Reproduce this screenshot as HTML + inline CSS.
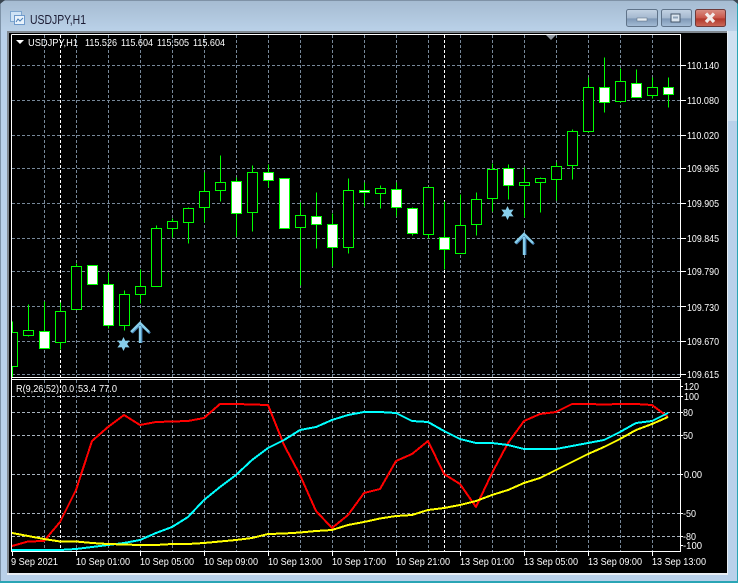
<!DOCTYPE html>
<html><head><meta charset="utf-8"><style>
html,body{margin:0;padding:0;width:738px;height:583px;overflow:hidden;background:#b9d1ea}
svg{display:block;position:absolute;left:0;top:0}
text{font-family:"Liberation Sans",sans-serif;font-size:10.400px;fill:#fff}
</style></head><body>
<svg width="738" height="583" viewBox="0 0 738 583" xmlns="http://www.w3.org/2000/svg">
<defs>
<linearGradient id="tb" x1="0" y1="0" x2="0" y2="1"><stop offset="0" stop-color="#a5bbd1"/><stop offset="1" stop-color="#bad1e8"/></linearGradient>
<linearGradient id="bt" x1="0" y1="0" x2="0" y2="1"><stop offset="0" stop-color="#c4d3e4"/><stop offset=".5" stop-color="#a4b8cf"/><stop offset=".55" stop-color="#7f98b6"/><stop offset="1" stop-color="#a5bdd6"/></linearGradient>
<linearGradient id="rd" x1="0" y1="0" x2="0" y2="1"><stop offset="0" stop-color="#d98f85"/><stop offset=".5" stop-color="#c9574a"/><stop offset=".55" stop-color="#b1382b"/><stop offset="1" stop-color="#cc6a5a"/></linearGradient>
<clipPath id="cm"><rect x="12" y="35" width="668" height="342"/></clipPath>
</defs>
<rect width="738" height="583" fill="#b9d1ea"/>
<rect width="738" height="31" fill="url(#tb)"/>
<rect x="0" y="0" width="738" height="1" fill="#7f92a6"/>
<rect x="728" y="31" width="9" height="90" fill="#cfe0f0"/>
<rect x="0" y="0" width="1" height="583" fill="#7e93a8"/>
<rect x="737" y="0" width="1" height="583" fill="#2aa5b5"/>
<rect x="0" y="581" width="738" height="2" fill="#2aa5b5"/>
<polygon points="0,0 5,0 0,4" fill="#3a4550"/>
<polygon points="738,0 733,0 738,4" fill="#3a4550"/>
<rect x="7" y="31" width="721" height="544" fill="#e8eef4"/>
<rect x="7" y="31" width="720" height="542" fill="#808890"/>
<rect x="9" y="33" width="718" height="540" fill="#000"/>

<!-- title icon -->
<rect x="10.500" y="11.500" width="11" height="10" fill="#cfe3f5" stroke="#7ea6cf"/>
<rect x="14.500" y="15.500" width="10" height="9" fill="#e8f2fb" stroke="#6f9acb"/>
<path d="M16 22l2-3 2 2 3-3" fill="none" stroke="#4a7fb8"/>
<text x="30" y="24" textLength="56" lengthAdjust="spacingAndGlyphs" style="font-size:13px;fill:#1b1b33">USDJPY,H1</text>

<!-- buttons -->
<rect x="626.500" y="9.500" width="31" height="17" rx="2" fill="url(#bt)" stroke="#5f7389"/>
<rect x="637" y="18" width="10" height="3" fill="#e6edf3" stroke="#56687c" stroke-width=".5"/>
<rect x="661.500" y="9.500" width="30" height="17" rx="2" fill="url(#bt)" stroke="#5f7389"/>
<rect x="671" y="14" width="9" height="8" fill="#dbe5ef" stroke="#44566a"/>
<rect x="673" y="16.500" width="5" height="2" fill="#8fa3b8"/>
<rect x="695.500" y="9.500" width="30" height="17" rx="2" fill="url(#rd)" stroke="#6e3a3a"/>
<path d="M706 13.500l8 8.500M714 13.500l-8 8.500" stroke="#f3ecea" stroke-width="3.200" fill="none"/>

<!-- grid -->
<g shape-rendering="crispEdges" stroke-width="1" fill="none">
<path stroke="#778899" stroke-dasharray="3 2" d="M12 65.500H680M12 100.500H680M12 135.500H680M12 168.500H680M12 203.500H680M12 238.500H680M12 271.500H680M12 306.500H680M12 341.500H680M12 374.500H680"/>
<path stroke="#778899" stroke-dasharray="3 2" d="M44.500 35V377M76.500 35V377M108.500 35V377M140.500 35V377M172.500 35V377M204.500 35V377M236.500 35V377M268.500 35V377M300.500 35V377M332.500 35V377M364.500 35V377M396.500 35V377M428.500 35V377M460.500 35V377M492.500 35V377M524.500 35V377M556.500 35V377M588.500 35V377M620.500 35V377M652.500 35V377M44.500 380V552M76.500 380V552M108.500 380V552M140.500 380V552M172.500 380V552M204.500 380V552M236.500 380V552M268.500 380V552M300.500 380V552M332.500 380V552M364.500 380V552M396.500 380V552M428.500 380V552M460.500 380V552M492.500 380V552M524.500 380V552M556.500 380V552M588.500 380V552M620.500 380V552M652.500 380V552"/>
<path stroke="#fff" stroke-dasharray="3 2" d="M60.500 35V377M444.500 35V377M60.500 380V552M444.500 380V552"/>
<path stroke="#a9b4bf" stroke-dasharray="3 2" d="M12 396.500H680M12 412.500H680M12 435.500H680M12 474.500H680M12 513.500H680M12 536.500H680"/>
</g>

<!-- candles -->
<g clip-path="url(#cm)">
<g transform="translate(.5 .5)" shape-rendering="crispEdges" stroke="#00ff00" stroke-width="1">
<path fill="none" d="M12 321V380M28 304V336M44 301V331M60 302V349M76 263V266M108 272V328M124 290V330M140 269V303M156 225V228M172 218V237M188 207V243M204 172V222M220 155V201M236 177V236M252 165V231M268 164V187M300 202V285M316 192V248M332 213V266M348 178V253M364 182V206M380 185V208M396 182V216M412 207V235M428 187V238M444 201V269M460 194V253M476 192V235M492 163V211M508 164V199M524 167V217M540 177V212M556 162V200M572 129V179M588 77V132M604 57V112M620 68V102M636 69V97M652 77V98M668 77V107"/>
<path fill="#000" d="M7 332h10v34h-10zM23 330h10v5h-10zM55 311h10v31h-10zM71 266h10v43h-10zM119 294h10v31h-10zM135 286h10v8h-10zM151 228h10v58h-10zM167 221h10v7h-10zM183 208h10v14h-10zM199 191h10v16h-10zM215 182h10v8h-10zM247 172h10v40h-10zM295 215h10v12h-10zM343 190h10v57h-10zM375 188h10v5h-10zM423 187h10v47h-10zM455 225h10v28h-10zM471 199h10v25h-10zM487 169h10v29h-10zM519 182h10v3h-10zM535 178h10v4h-10zM551 166h10v13h-10zM567 131h10v34h-10zM583 87h10v44h-10zM615 81h10v20h-10zM647 87h10v8h-10z"/>
<path fill="#fff" d="M39 331h10v17h-10zM87 265h10v19h-10zM103 284h10v41h-10zM231 181h10v32h-10zM263 172h10v8h-10zM279 178h10v50h-10zM311 216h10v8h-10zM327 224h10v23h-10zM359 190h10v2h-10zM391 189h10v18h-10zM407 208h10v25h-10zM439 237h10v12h-10zM503 168h10v17h-10zM599 87h10v15h-10zM631 83h10v14h-10zM663 87h10v7h-10z"/>
</g>
</g>

<!-- arrows and stars -->
<g fill="none" stroke-width="2.400">
<path stroke="#4682b4" d="M141.200 327V343M132 332.800L140.500 324.300L150 333.300"/>
<path stroke="#87ceeb" d="M140 326V343M131 332L140 323L149 332"/>
<path stroke="#4682b4" d="M525.200 238V255M516 243.800L524.500 235.300L534 244.300"/>
<path stroke="#87ceeb" d="M524 237V255M515 243L524 234L533 243"/>
</g>
<g fill="#87ceeb">
<polygon points="123.500,337 125.300,340.800 129.600,340.500 127.100,344 129.600,347.500 125.300,347.200 123.500,351 121.700,347.200 117.400,347.500 119.900,344 117.400,340.500 121.700,340.800"/>
<polygon points="507.500,206 509.300,209.800 513.600,209.500 511.100,213 513.600,216.500 509.300,216.200 507.500,220 505.700,216.200 501.400,216.500 503.900,213 501.400,209.500 505.700,209.800"/>
</g>
<polygon points="546,35 556,35 551,40" fill="#8f979f"/>

<!-- indicator lines -->
<g fill="none" stroke-width="2" shape-rendering="crispEdges" stroke-linejoin="round">
<polyline stroke="#ff0000" points="12,546 28,541.500 44,541 60,522 76,490 92,441 108,427 124,415 140,425 156,422 172,421.500 188,421 204,418 220,404 236,404 252,404.500 268,405 284,445 300,475 316,511 332,528 348,515 364,493 380,489 396,461 412,454 428,441 444,474 460,484 476,507 492,473 508,443 524,421 540,414 556,412 572,404 588,404 604,404.500 620,404 636,404 652,405 668,417"/>
<polyline stroke="#00ffff" points="12,550 60,550 76,549 92,547 108,545 124,543 140,540 156,533 172,527 188,517 204,500 220,487 236,475 252,460 268,448 284,440 300,430 316,427 332,420 348,415 364,412 380,412 396,413 412,421 428,422 444,431 460,439 476,443 492,443 508,445 524,449 540,449 556,449 572,446 588,443 604,440 620,432 636,423 652,421 668,413"/>
<polyline stroke="#ffff00" points="12,533 28,536 44,539 60,541.500 76,541.500 92,543 108,544 124,544.500 140,545 156,545 172,544 188,544 204,543 220,541.500 236,540 252,538 268,534 284,533.500 300,532.500 316,531 332,530 348,525 364,522 380,518.500 396,516 412,515 428,510 444,508 460,505 476,501 492,495 508,490 524,483 540,478 556,470 572,462 588,454 604,447 620,439 636,430 652,424 668,417"/>
</g>

<!-- frames -->
<g shape-rendering="crispEdges" fill="none" stroke="#fff" stroke-width="1">
<path d="M11.500 34.500H680.500V377M11.500 34.500V552M11 377.500H680.500M11 379.500H680.500V551.500H11"/>
<path d="M681 65.500h5M681 100.500h5M681 135.500h5M681 168.500h5M681 203.500h5M681 238.500h5M681 271.500h5M681 306.500h5M681 341.500h5M681 374.500h5"/>
<path d="M681 386.500h2M681 396.500h2M681 412.500h2M681 435.500h2M681 474.500h2M681 513.500h2M681 536.500h2M681 545.500h2"/>
<path d="M12.500 552v4M76.500 552v4M140.500 552v4M204.500 552v4M268.500 552v4M332.500 552v4M396.500 552v4M460.500 552v4M524.500 552v4M588.500 552v4M652.500 552v4"/>
</g>

<!-- header labels -->
<path d="M16 40h8l-4 4z" fill="#fff"/>
<g>
<text x="28" y="46" textLength="50" lengthAdjust="spacingAndGlyphs">USDJPY,H1</text>
<text x="85" y="46" textLength="32" lengthAdjust="spacingAndGlyphs">115.526</text>
<text x="121" y="46" textLength="32" lengthAdjust="spacingAndGlyphs">115.604</text>
<text x="157" y="46" textLength="32" lengthAdjust="spacingAndGlyphs">115.505</text>
<text x="193" y="46" textLength="32" lengthAdjust="spacingAndGlyphs">115.604</text>
<text x="16" y="392" textLength="43" lengthAdjust="spacingAndGlyphs">R(9,26,52)</text>
<text x="62" y="392" textLength="12" lengthAdjust="spacingAndGlyphs">0.0</text>
<text x="78" y="392" textLength="18" lengthAdjust="spacingAndGlyphs">53.4</text>
<text x="99" y="392" textLength="18" lengthAdjust="spacingAndGlyphs">77.0</text>
</g>

<!-- price axis -->
<g>
<text x="687" y="69" textLength="32" lengthAdjust="spacingAndGlyphs">110.140</text>
<text x="687" y="104" textLength="32" lengthAdjust="spacingAndGlyphs">110.080</text>
<text x="687" y="139" textLength="32" lengthAdjust="spacingAndGlyphs">110.020</text>
<text x="687" y="172" textLength="32" lengthAdjust="spacingAndGlyphs">109.965</text>
<text x="687" y="207" textLength="32" lengthAdjust="spacingAndGlyphs">109.905</text>
<text x="687" y="242" textLength="32" lengthAdjust="spacingAndGlyphs">109.845</text>
<text x="687" y="275" textLength="32" lengthAdjust="spacingAndGlyphs">109.790</text>
<text x="687" y="311" textLength="32" lengthAdjust="spacingAndGlyphs">109.730</text>
<text x="687" y="345" textLength="32" lengthAdjust="spacingAndGlyphs">109.670</text>
<text x="687" y="378" textLength="32" lengthAdjust="spacingAndGlyphs">109.615</text>
<text x="684" y="390" textLength="15" lengthAdjust="spacingAndGlyphs">120</text>
<text x="684" y="400" textLength="15" lengthAdjust="spacingAndGlyphs">100</text>
<text x="683" y="416" textLength="10" lengthAdjust="spacingAndGlyphs">80</text>
<text x="683" y="439" textLength="10" lengthAdjust="spacingAndGlyphs">50</text>
<text x="684" y="478" textLength="18" lengthAdjust="spacingAndGlyphs">0.00</text>
<text x="683" y="517" textLength="13" lengthAdjust="spacingAndGlyphs">-50</text>
<text x="683" y="540" textLength="13" lengthAdjust="spacingAndGlyphs">-80</text>
<text x="683" y="549" textLength="19" lengthAdjust="spacingAndGlyphs">-100</text>
</g>

<!-- time axis -->
<g>
<text x="11" y="565" textLength="47" lengthAdjust="spacingAndGlyphs">9 Sep 2021</text>
<text x="76" y="565" textLength="54" lengthAdjust="spacingAndGlyphs">10 Sep 01:00</text>
<text x="140" y="565" textLength="54" lengthAdjust="spacingAndGlyphs">10 Sep 05:00</text>
<text x="204" y="565" textLength="54" lengthAdjust="spacingAndGlyphs">10 Sep 09:00</text>
<text x="268" y="565" textLength="54" lengthAdjust="spacingAndGlyphs">10 Sep 13:00</text>
<text x="332" y="565" textLength="54" lengthAdjust="spacingAndGlyphs">10 Sep 17:00</text>
<text x="396" y="565" textLength="54" lengthAdjust="spacingAndGlyphs">10 Sep 21:00</text>
<text x="460" y="565" textLength="54" lengthAdjust="spacingAndGlyphs">13 Sep 01:00</text>
<text x="524" y="565" textLength="54" lengthAdjust="spacingAndGlyphs">13 Sep 05:00</text>
<text x="588" y="565" textLength="54" lengthAdjust="spacingAndGlyphs">13 Sep 09:00</text>
<text x="652" y="565" textLength="54" lengthAdjust="spacingAndGlyphs">13 Sep 13:00</text>
</g>
</svg>
</body></html>
